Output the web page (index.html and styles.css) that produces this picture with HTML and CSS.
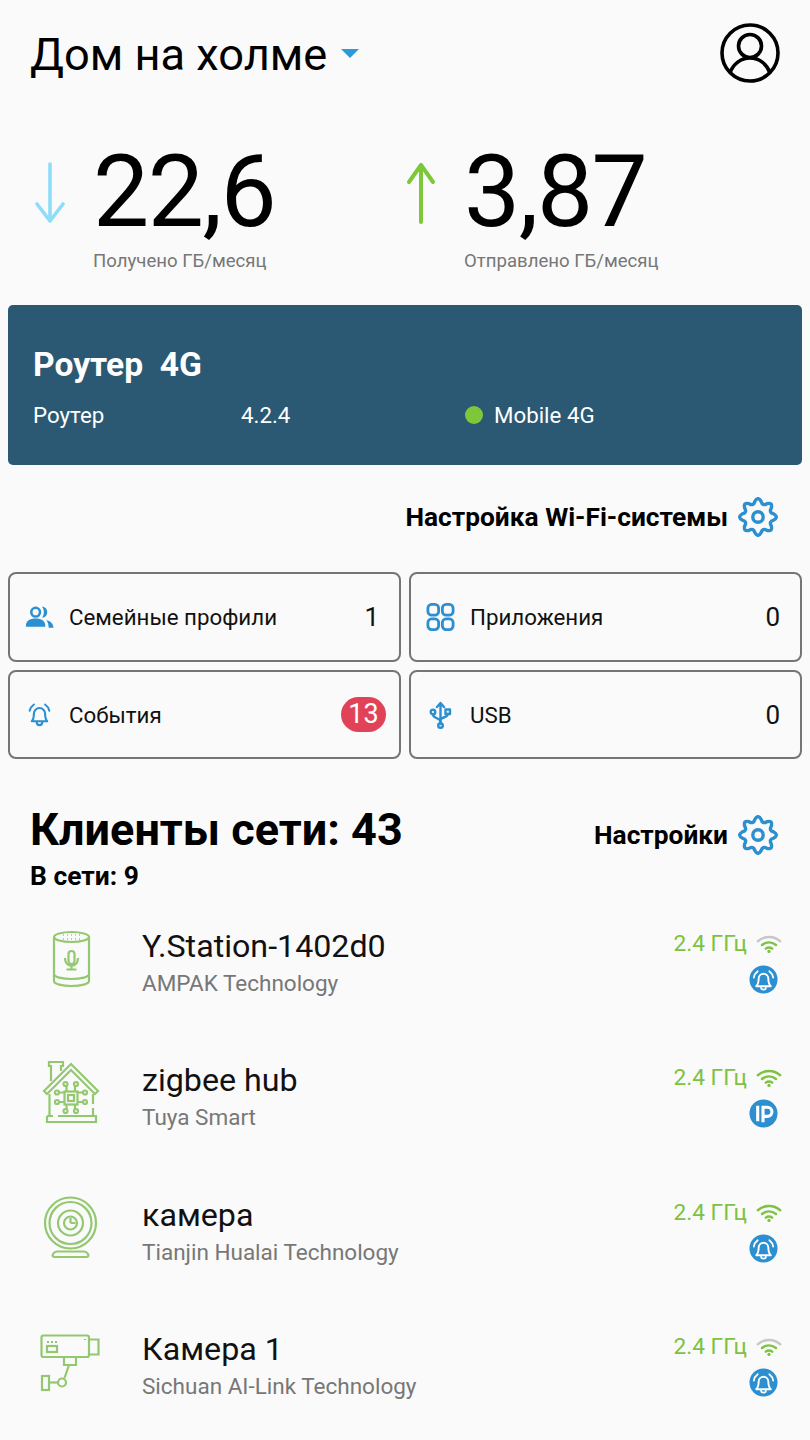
FILE: index.html
```html
<!DOCTYPE html>
<html lang="ru">
    <head>
        <meta charset="UTF-8">
        <meta name="viewport" content="width=device-width, initial-scale=1.0">
        <title>Дом на холме</title>
        <link rel="stylesheet" href="styles.css">
    </head>
    <body>
        <svg class="defs" width="0" height="0">
            <defs>
                <symbol id="gear" viewBox="0 0 40 40">
                    <path fill="none" stroke="currentColor" stroke-width="3.4" stroke-linejoin="round" d="M16.88 4.31Q20 -1 23.12 4.31Q24.4 9.38 28.89 6.7Q34.85 5.15 33.3 11.11Q30.62 15.6 35.69 16.88Q41 20 35.69 23.12Q30.62 24.4 33.3 28.89Q34.85 34.85 28.89 33.3Q24.4 30.62 23.12 35.69Q20 41 16.88 35.69Q15.6 30.62 11.11 33.3Q5.15 34.85 6.7 28.89Q9.38 24.4 4.31 23.12Q-1 20 4.31 16.88Q9.38 15.6 6.7 11.11Q5.15 5.15 11.11 6.7Q15.6 9.38 16.88 4.31z"/>
                    <circle cx="20" cy="20" r="5.2" fill="none" stroke="currentColor" stroke-width="3.4"/>
                </symbol>
                <symbol id="bell" viewBox="0 0 40 40">
                    <path fill="none" stroke="currentColor" stroke-width="3" stroke-linejoin="round" stroke-linecap="round" d="M9 29c3-3 3-6 3-11a8 8 0 0 1 16 0c0 5 0 8 3 11z"/>
                    <path fill="none" stroke="currentColor" stroke-width="3" stroke-linecap="round" d="M16 30c0 6 8 6 8 0M6 14c1-4 3-7 6-9M34 14c-1-4-3-7-6-9"/>
                </symbol>
                <symbol id="badge-bell" viewBox="0 0 30 30">
                    <circle cx="15" cy="15" r="14.5" fill="#2b8fd0"/>
                    <path fill="none" stroke="#fff" stroke-width="2" stroke-linejoin="round" d="M7.5 22c2-2 2.5-4 2.5-8a5 5 0 0 1 10 0c0 4 .5 6 2.5 8z"/>
                    <path fill="none" stroke="#fff" stroke-width="1.8" stroke-linecap="round" d="M12.5 23.5c0 2.5 5 2.5 5 0M5 13c.5-3 2-5 4-6.5M25 13c-.5-3-2-5-4-6.5"/>
                </symbol>
                <symbol id="badge-ip" viewBox="0 0 30 30">
                    <circle cx="15" cy="15" r="14.5" fill="#2b8fd0"/>
                    <path fill="none" stroke="#fff" stroke-width="3.2" d="M9 7v16M14.5 24V8.500h4.500a4.500 4.500 0 0 1 0 9.500h-4.500"/>
                </symbol>
                <symbol id="wifi-full" viewBox="0 0 28 20">
                    <g fill="none" stroke="#7dc242" stroke-width="2.6" stroke-linecap="round">
                        <path d="M2 7c7-6 17-6 24 0"/>
                        <path d="M6.5 11c4.5-3.5 10.5-3.5 15 0"/>
                        <path d="M10.5 15c2-1.5 5-1.5 7 0"/>
                    </g>
                    <circle cx="14" cy="18" r="1.8" fill="#7dc242"/>
                </symbol>
                <symbol id="wifi-part" viewBox="0 0 28 20">
                    <g fill="none" stroke-width="2.6" stroke-linecap="round">
                        <path stroke="#c8c8c8" d="M2 7c7-6 17-6 24 0"/>
                        <path stroke="#7dc242" d="M6.5 11c4.5-3.5 10.5-3.5 15 0"/>
                        <path stroke="#7dc242" d="M10.5 15c2-1.5 5-1.5 7 0"/>
                    </g>
                    <circle cx="14" cy="18" r="1.8" fill="#7dc242"/>
                </symbol>
            </defs>
        </svg>

        <header class="top">
            <div class="home-name">
                <h1>Дом на холме</h1>
                <span class="caret"></span>
            </div>
            <svg class="avatar" viewBox="0 0 60 60">
                <g fill="none" stroke="#000" stroke-width="3.6">
                    <circle cx="30" cy="30" r="28"/>
                    <circle cx="30" cy="23" r="11.5"/>
                    <path d="M10 50c3-9 11-15 20-15s17 6 20 15"/>
                </g>
            </svg>
        </header>

        <section class="stats">
            <div class="stat stat-down">
                <svg class="arrow" viewBox="0 0 32 62">
                    <path fill="none" stroke="#8fdcfb" stroke-width="3.6" stroke-linecap="round" stroke-linejoin="round" d="M16 2v57M3 42l13 17 13-17"/>
                </svg>
                <div>
                    <div class="stat-value">22,6</div>
                    <div class="stat-label">Получено ГБ/месяц</div>
                </div>
            </div>
            <div class="stat stat-up">
                <svg class="arrow" viewBox="0 0 32 62">
                    <path fill="none" stroke="#7dc83a" stroke-width="4" stroke-linecap="round" stroke-linejoin="round" d="M16 60V3M4 20L16 3l12 17"/>
                </svg>
                <div>
                    <div class="stat-value">3,87</div>
                    <div class="stat-label">Отправлено ГБ/месяц</div>
                </div>
            </div>
        </section>

        <section class="router">
            <h2>Роутер&nbsp; 4G</h2>
            <div class="router-info">
                <span class="router-type">Роутер</span>
                <span class="router-version">4.2.4</span>
                <span class="router-link"><i class="dot"></i>Mobile 4G</span>
            </div>
        </section>

        <div class="link-row wifi-link">
            <span>Настройка Wi-Fi-системы</span>
            <svg class="gear"><use href="#gear"/></svg>
        </div>

        <section class="tiles">
            <div class="tile">
                <svg class="tile-icon" viewBox="0 0 30 24">
                    <circle cx="11" cy="7" r="4.5" fill="none" stroke="currentColor" stroke-width="2.6"/>
                    <path fill="currentColor" d="M1 21c0-5 4-7.500 10-7.500s10 2.500 10 7.500v1H1zM17.500 1.500c3.500 0 5.500 2.500 5.500 5.500s-2 5.500-5.500 5.500c1.500-1.500 2-3.500 2-5.500s-.5-4-2-5.500zM22 15c4 1 7 3 7.500 8h-5c0-3-1-6-2.500-8z"/>
                </svg>
                <span class="tile-name">Семейные профили</span>
                <span class="tile-count">1</span>
            </div>
            <div class="tile">
                <svg class="tile-icon" viewBox="0 0 30 30">
                    <g fill="none" stroke="currentColor" stroke-width="3">
                        <rect x="1.5" y="1.5" width="11.5" height="11.5" rx="4"/>
                        <rect x="17" y="1.5" width="11.5" height="11.5" rx="4"/>
                        <rect x="1.5" y="17" width="11.5" height="11.5" rx="4"/>
                        <rect x="17" y="17" width="11.5" height="11.5" rx="4"/>
                    </g>
                </svg>
                <span class="tile-name">Приложения</span>
                <span class="tile-count">0</span>
            </div>
            <div class="tile">
                <svg class="tile-icon"><use href="#bell"/></svg>
                <span class="tile-name">События</span>
                <span class="tile-badge">13</span>
            </div>
            <div class="tile">
                <svg class="tile-icon" viewBox="0 0 22 28">
                    <g fill="none" stroke="currentColor" stroke-width="2.4" stroke-linecap="round" stroke-linejoin="round">
                        <path d="M11 3v20M7.500 6L11 2l3.500 4"/>
                        <circle cx="11" cy="24.5" r="2.3"/>
                        <circle cx="3.5" cy="11" r="2.3"/>
                        <rect x="16" y="8.5" width="4.5" height="4.5"/>
                        <path d="M3.500 13.500c0 4 7.500 3.500 7.500 7M18.200 13c0 4-7.200 3-7.200 6"/>
                    </g>
                </svg>
                <span class="tile-name">USB</span>
                <span class="tile-count">0</span>
            </div>
        </section>

        <section class="clients-head">
            <div>
                <h2>Клиенты сети: 43</h2>
                <p>В сети: 9</p>
            </div>
            <div class="link-row">
                <span>Настройки</span>
                <svg class="gear"><use href="#gear"/></svg>
            </div>
        </section>

        <section class="clients">
            <div class="client">
                <svg viewBox="0 0 62 62" class="device">
                    <ellipse cx="31.5" cy="10" rx="17.5" ry="5"/>
                    <path d="M14 10v44c0 3 8 5 17.500 5s17.500-2 17.500-5V10"/>
                    <path d="M14 47c0 3 8 5 17.500 5s17.500-2 17.500-5"/>
                    <rect x="28.5" y="24" width="6" height="13" rx="3"/>
                    <path d="M25 31c0 5 3 7.500 6.500 7.500s6.500-2.500 6.500-7.500M31.500 38.500v4M26.500 42.500h10"/>
                    <path stroke-dasharray="1 3" stroke-width="1.5" d="M23 8h18M23 12h18"/>
                </svg>
                <div class="client-text">
                    <div class="client-name">Y.Station-1402d0</div>
                    <div class="client-vendor">AMPAK Technology</div>
                </div>
                <div class="client-status">
                    <div class="band">2.4 ГГц <svg class="wifi"><use href="#wifi-part"/></svg></div>
                    <svg class="state"><use href="#badge-bell"/></svg>
                </div>
            </div>

            <div class="client">
                <svg viewBox="0 0 62 62" class="device">
                    <path d="M4 30L31 3l27 27-3 3L31 9 7 33z"/>
                    <path d="M11 20V5H9V1h14v4h-2v5"/>
                    <path d="M9.500 33v22M53 33v10M53 47v8"/>
                    <path d="M7 55h6M18 55h38v6H7v-6"/>
                    <rect x="24.5" y="30.5" width="13" height="13"/>
                    <rect x="28" y="34" width="6" height="6"/>
                    <circle cx="25.5" cy="23" r="2"/>
                    <circle cx="36" cy="23" r="2"/>
                    <circle cx="17" cy="31.5" r="2"/>
                    <circle cx="17" cy="41" r="2"/>
                    <circle cx="45" cy="31.5" r="2"/>
                    <circle cx="45" cy="41" r="2"/>
                    <circle cx="25.5" cy="50" r="2"/>
                    <circle cx="36" cy="50" r="2"/>
                    <path d="M19 31.500h5.500M19 41h5.500M37.500 31.500H43M37.500 41H43M26.500 25v5.500M35 25v5.500M26.500 43.500V48M35 43.500V48"/>
                </svg>
                <div class="client-text">
                    <div class="client-name">zigbee hub</div>
                    <div class="client-vendor">Tuya Smart</div>
                </div>
                <div class="client-status">
                    <div class="band">2.4 ГГц <svg class="wifi"><use href="#wifi-full"/></svg></div>
                    <svg class="state"><use href="#badge-ip"/></svg>
                </div>
            </div>

            <div class="client">
                <svg viewBox="0 0 62 62" class="device">
                    <circle cx="30.5" cy="27" r="25.5"/>
                    <circle cx="30.5" cy="27" r="21"/>
                    <circle cx="30.5" cy="27" r="12.5"/>
                    <circle cx="30.5" cy="27" r="6.5"/>
                    <path d="M30.500 27v-5M30.500 27h5"/>
                    <path d="M15 61h31c2.500 0 3-1.500 2-3-1-1.500-2-2.500-4-2.500H17c-2 0-3 1-4 2.500-1 1.500-.5 3 2 3z"/>
                </svg>
                <div class="client-text">
                    <div class="client-name">камера</div>
                    <div class="client-vendor">Tianjin Hualai Technology</div>
                </div>
                <div class="client-status">
                    <div class="band">2.4 ГГц <svg class="wifi"><use href="#wifi-full"/></svg></div>
                    <svg class="state"><use href="#badge-bell"/></svg>
                </div>
            </div>

            <div class="client">
                <svg viewBox="0 0 62 62" class="device">
                    <rect x="1.5" y="5.5" width="47.5" height="21.5" rx="2"/>
                    <path d="M49 9.500h9.500v15H49"/>
                    <rect x="7" y="16" width="10" height="6"/>
                    <path d="M7 12h2M11 12h2M15 12h2M45 9v1"/>
                    <path d="M24 27v8h12v-8M29 35l-4.500 13"/>
                    <circle cx="22" cy="52.5" r="4"/>
                    <rect x="2" y="46" width="7" height="14"/>
                    <path d="M9 52.500h9"/>
                </svg>
                <div class="client-text">
                    <div class="client-name">Камера 1</div>
                    <div class="client-vendor">Sichuan AI-Link Technology</div>
                </div>
                <div class="client-status">
                    <div class="band">2.4 ГГц <svg class="wifi"><use href="#wifi-part"/></svg></div>
                    <svg class="state"><use href="#badge-bell"/></svg>
                </div>
            </div>
        </section>
    </body>
</html>
```

FILE: styles.css
```css
* {
    box-sizing: border-box;
    margin: 0;
}

body {
    width: 810px;
    height: 1440px;
    overflow: hidden;
    background-color: #fafafa;
    color: #000;
    font-family: Roboto, sans-serif;
}

.defs {
    position: absolute;
}

.top {
    display: flex;
    justify-content: space-between;
    align-items: center;
    height: 105px;
    padding: 0 30px;
}

.home-name {
    display: flex;
    align-items: center;
    gap: 14px;
    margin-top: 4px;
}

h1 {
    font-size: 45.2px;
    font-weight: 400;
    line-height: 54px;
}

.caret {
    width: 0;
    height: 0;
    margin-bottom: 2px;
    border-left: 9px solid transparent;
    border-right: 9px solid transparent;
    border-top: 9px solid #2b9ad8;
}

.avatar {
    width: 60px;
    height: 60px;
}

.stats {
    display: flex;
    height: 200px;
    padding: 33px 0 0 34px;
}

.stat {
    display: flex;
    width: 371px;
}

.arrow {
    width: 32px;
    height: 62px;
    margin: 24px 27px 0 0;
    flex-shrink: 0;
}

.stat-value {
    font-size: 100px;
    letter-spacing: -1.5px;
    line-height: 108px;
}

.stat-label {
    margin-top: 4px;
    font-size: 18.6px;
    line-height: 22px;
    color: #777;
}

.router {
    height: 160px;
    margin: 0 8px;
    padding: 41px 25px 0;
    border-radius: 5px;
    background-color: #2b5974;
    color: #fff;
}

.router h2 {
    font-size: 33.6px;
    font-weight: 700;
    line-height: 38px;
}

.router-info {
    display: flex;
    margin-top: 18px;
    font-size: 22.3px;
    line-height: 26px;
}

.router-type {
    width: 208px;
}

.router-version {
    width: 224px;
}

.router-link {
    display: flex;
    align-items: center;
}

.dot {
    width: 18px;
    height: 18px;
    margin-right: 11px;
    border-radius: 50%;
    background-color: #7dc83a;
}

.link-row {
    display: flex;
    justify-content: flex-end;
    align-items: center;
    gap: 10px;
    font-size: 26.3px;
    font-weight: 700;
}

.wifi-link {
    height: 107px;
    padding: 0 32px 3px 0;
}

.gear {
    width: 40px;
    height: 40px;
    color: #2b8fd0;
}

.tiles {
    display: grid;
    grid-template-columns: 1fr 1fr;
    grid-auto-rows: 89.5px;
    gap: 8px;
    padding: 0 8px;
}

.tile {
    display: flex;
    align-items: center;
    padding: 1px 20px 0 0;
    border: 2px solid #757575;
    border-radius: 8px;
    color: #111;
}

.tile-icon {
    width: 29px;
    height: 28px;
    margin: 0 15px;
    color: #2b8fd0;
    flex-shrink: 0;
}

.tile-name {
    flex: 1;
    font-size: 22.3px;
}

.tile-count {
    font-size: 26px;
}

.tile-badge {
    width: 45px;
    height: 35px;
    margin-right: -7px;
    border-radius: 18px;
    background-color: #e04358;
    color: #fff;
    font-size: 27px;
    line-height: 35px;
    text-align: center;
}

.clients-head {
    display: flex;
    justify-content: space-between;
    align-items: flex-start;
    padding: 46px 32px 0 30px;
}

.clients-head h2 {
    font-size: 45px;
    font-weight: 700;
    line-height: 50px;
}

.clients-head p {
    margin-top: 7px;
    font-size: 26.4px;
    font-weight: 700;
    line-height: 28px;
}

.clients-head .link-row {
    margin-top: 10px;
}

.client {
    display: flex;
    height: 134.3px;
    padding: 36px 28px 0 0;
}

.device {
    width: 62px;
    height: 62px;
    margin: 1px 40px 0;
    overflow: visible;
    flex-shrink: 0;
    fill: none;
    stroke: #93c870;
    stroke-width: 2.2;
}

.client-text {
    flex: 1;
}

.client-name {
    font-size: 32.2px;
    line-height: 40px;
    color: #111;
}

.client-vendor {
    margin-top: 2px;
    font-size: 22.5px;
    line-height: 30px;
    color: #777;
}

.client-status {
    display: flex;
    flex-direction: column;
    align-items: flex-end;
    padding-top: 3px;
}

.band {
    display: flex;
    align-items: center;
    gap: 9px;
    font-size: 22.7px;
    line-height: 30px;
    color: #7dc242;
}

.wifi {
    width: 26px;
    height: 20px;
}

.state {
    width: 29px;
    height: 29px;
    margin: 6px 4px 0 0;
}
```
